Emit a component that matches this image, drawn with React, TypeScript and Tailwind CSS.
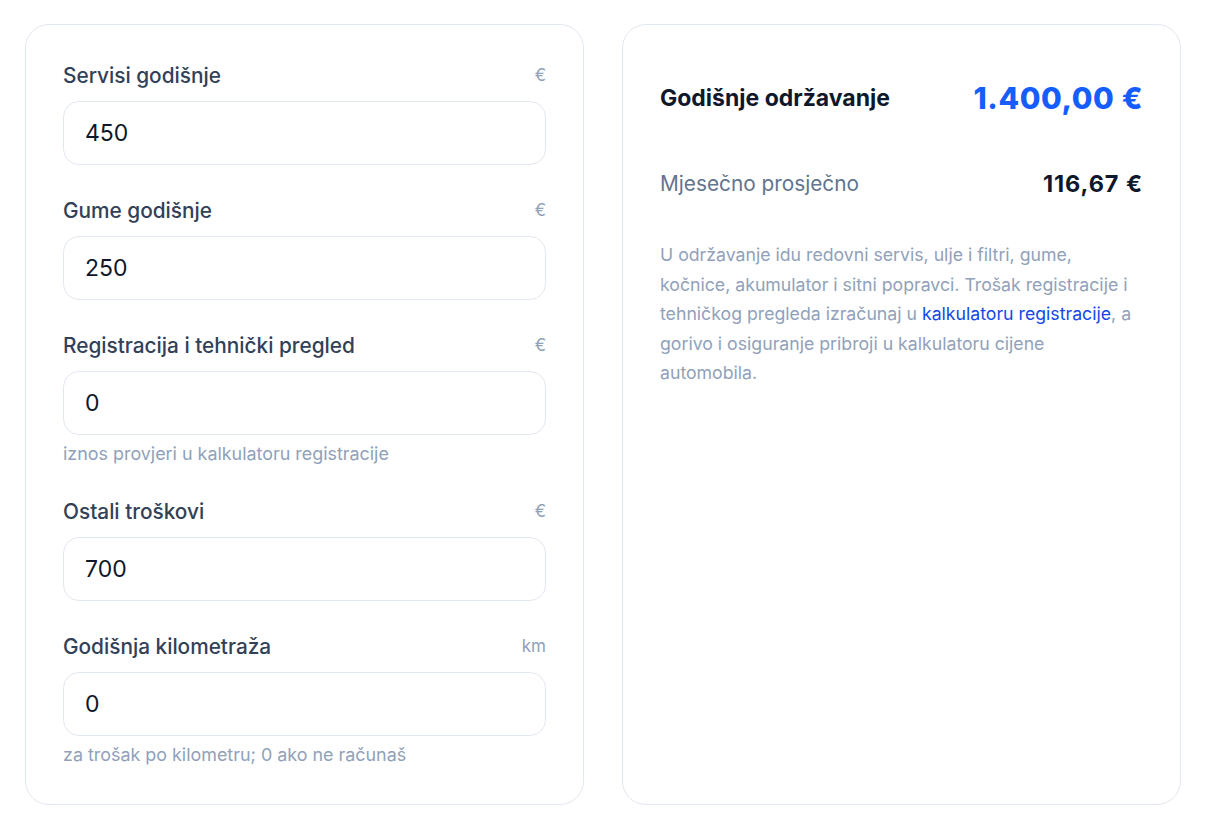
import React from 'react'

// polja za unos troškova
const fields = [
  { label: 'Servisi godišnje', unit: '€', value: '450', hint: '' },
  { label: 'Gume godišnje', unit: '€', value: '250', hint: '' },
  { label: 'Registracija i tehnički pregled', unit: '€', value: '0', hint: 'iznos provjeri u kalkulatoru registracije' },
  { label: 'Ostali troškovi', unit: '€', value: '700', hint: '' },
  { label: 'Godišnja kilometraža', unit: 'km', value: '0', hint: 'za trošak po kilometru; 0 ako ne računaš' },
]

export default function App() {
  return (
    <div className="min-h-screen bg-white px-[25px] pt-[24px] font-['Inter','Noto_Sans',sans-serif]">
      <div className="grid grid-cols-2 gap-[38px]">
        {/* lijeva kartica s unosom */}
        <div className="rounded-[24px] border border-slate-200 bg-white p-[37px]">
          <div className="flex flex-col gap-[32px]">
            {fields.map((f) => (
              <Field key={f.label} {...f} />
            ))}
          </div>
        </div>

        {/* desna kartica s rezultatom */}
        <div className="rounded-[24px] border border-slate-200 bg-white p-[37px]">
          <div className="flex items-center justify-between py-[18px]">
            <h2 className="text-[23px] font-bold leading-[32px] text-slate-900">Godišnje održavanje</h2>
            <div className="text-[30px] font-extrabold leading-[36px] tracking-[0.02em] text-blue-600">1.400,00 €</div>
          </div>
          <div className="mt-[36px] flex h-[28px] items-center justify-between">
            <span className="text-[20.8px] text-slate-500">Mjesečno prosječno</span>
            <span className="text-[23.5px] font-bold tracking-[0.04em] text-slate-900">116,67 €</span>
          </div>
          <p className="mt-[42px] whitespace-nowrap text-[17.7px] leading-[29.6px] text-slate-400">
            U održavanje idu redovni servis, ulje i filtri, gume,
            <br />
            kočnice, akumulator i sitni popravci. Trošak registracije i
            <br />
            tehničkog pregleda izračunaj u{' '}
            <a href="#" className="text-blue-700">kalkulatoru registracije</a>, a
            <br />
            gorivo i osiguranje pribroji u kalkulatoru cijene
            <br />
            automobila.
          </p>
        </div>
      </div>

      <div className="flex justify-end pt-[24px] pr-[13px]">
        <div className="h-10 w-[208px] rounded-t-[10px] border-t border-slate-100" />
      </div>
    </div>
  )
}

function Field({ label, unit, value, hint }: { label: string; unit: string; value: string; hint: string }) {
  return (
    <div>
      <div className="mb-[11px] flex h-[28px] items-center justify-between">
        <label className="text-[20.8px] font-medium text-slate-700">{label}</label>
        <span className="text-[17px] text-slate-400">{unit}</span>
      </div>
      <input
        readOnly
        value={value}
        className="h-[64px] w-full rounded-[16px] border border-slate-200 bg-white px-[21px] text-[23px] text-slate-900 outline-none"
      />
      {hint && <p className="mt-[7px] text-[17.9px] leading-[24px] text-slate-400">{hint}</p>}
    </div>
  )
}
